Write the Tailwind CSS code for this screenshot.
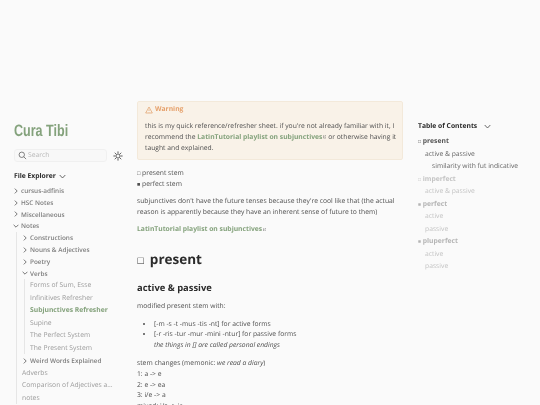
<!DOCTYPE html>
<html><head><meta charset="utf-8"><script src="https://cdn.jsdelivr.net/npm/@tailwindcss/browser@4"></script></head>
<body class="w-[540px] h-[405px] overflow-hidden bg-[#fafafa] font-['Open_Sans',sans-serif] text-[6.75px] text-[#4e4e4e] [text-rendering:geometricPrecision]">
<div class="flex h-[405px] overflow-hidden blur-[0.3px]">
  <aside class="w-[137px] shrink-0 pt-[121px] pl-[14px]">
    <div class="h-[20px] font-['Liberation_Sans',sans-serif] font-bold text-[16.5px] leading-[20px] text-[#84a27c] [transform:scaleX(.76)] origin-left whitespace-nowrap">Cura Tibi</div>
    <div class="flex items-center mt-[8px] gap-[6px]">
      <div class="w-[93px] h-[13px] rounded-[3px] border border-[#f0f0f0] bg-[#f8f8f8] flex items-center pl-[3px] gap-[1px] text-[#b8b8b8]">
        <svg class="w-[9px] h-[9px]" viewBox="0 0 10 10" fill="none" stroke="#555" stroke-width=".8"><circle cx="4.2" cy="4.2" r="3"/><path d="M6.4 6.4 9 9"/></svg>
        <span class="text-[6.75px] leading-none">Search</span>
      </div>
      <svg class="w-[10px] h-[10px]" viewBox="0 0 24 24" fill="none" stroke="#3a3a3a" stroke-width="2"><circle cx="12" cy="12" r="5"/><path d="M12 1v4M12 19v4M1 12h4M19 12h4M4.2 4.2l2.8 2.8M17 17l2.8 2.8M4.2 19.8 7 17M17 7l2.8-2.8"/></svg>
    </div>
    <div class="flex items-center mt-[8px] h-[12px] gap-[3px] font-bold text-[#2b2b2b] text-[6.75px]">File Explorer
      <svg class="w-[7px] h-[5px]" viewBox="0 0 7 5" fill="none" stroke="#444" stroke-width=".8"><path d="M.7 1 3.5 4 6.3 1"/></svg>
    </div>
    <div class="mt-[3px] font-semibold text-[#7d7d7d] text-[6.4px] leading-[11.8px]">
      <div class="flex items-center gap-[3px] h-[11.8px]"><svg class="w-[4px] h-[6px]" viewBox="0 0 4 6" fill="none" stroke="#555" stroke-width=".8"><path d="M.8.6 3.2 3 .8 5.4"/></svg><span>cursus-adfinis</span></div>
      <div class="flex items-center gap-[3px] h-[11.8px]"><svg class="w-[4px] h-[6px]" viewBox="0 0 4 6" fill="none" stroke="#555" stroke-width=".8"><path d="M.8.6 3.2 3 .8 5.4"/></svg><span>HSC Notes</span></div>
      <div class="flex items-center gap-[3px] h-[11.8px]"><svg class="w-[4px] h-[6px]" viewBox="0 0 4 6" fill="none" stroke="#555" stroke-width=".8"><path d="M.8.6 3.2 3 .8 5.4"/></svg><span>Miscellaneous</span></div>
      <div class="flex items-center gap-[2px] h-[11.8px] -ml-[1px]"><svg class="w-[6px] h-[4px]" viewBox="0 0 6 4" fill="none" stroke="#555" stroke-width=".8"><path d="M.6.8 3 3.2 5.4.8"/></svg><span>Notes</span></div>
      <div class="ml-[2px] pl-[6px] border-l border-[#e6e6e6]">
        <div class="flex items-center gap-[3px] h-[11.8px]"><svg class="w-[4px] h-[6px]" viewBox="0 0 4 6" fill="none" stroke="#555" stroke-width=".8"><path d="M.8.6 3.2 3 .8 5.4"/></svg><span>Constructions</span></div>
        <div class="flex items-center gap-[3px] h-[11.8px]"><svg class="w-[4px] h-[6px]" viewBox="0 0 4 6" fill="none" stroke="#555" stroke-width=".8"><path d="M.8.6 3.2 3 .8 5.4"/></svg><span>Nouns &amp; Adjectives</span></div>
        <div class="flex items-center gap-[3px] h-[11.8px]"><svg class="w-[4px] h-[6px]" viewBox="0 0 4 6" fill="none" stroke="#555" stroke-width=".8"><path d="M.8.6 3.2 3 .8 5.4"/></svg><span>Poetry</span></div>
        <div class="flex items-center gap-[2px] h-[11.8px] -ml-[1px]"><svg class="w-[6px] h-[4px]" viewBox="0 0 6 4" fill="none" stroke="#555" stroke-width=".8"><path d="M.6.8 3 3.2 5.4.8"/></svg><span>Verbs</span></div>
        <div class="ml-[1px] pl-[5px] border-l border-[#e6e6e6] font-normal text-[#9a9a9a] text-[6.75px] leading-[12.5px]">
          <div class="h-[12.5px]">Forms of Sum, Esse</div>
          <div class="h-[12.5px]">Infinitives Refresher</div>
          <div class="h-[12.5px] font-bold text-[#84a27c]">Subjunctives Refresher</div>
          <div class="h-[12.5px]">Supine</div>
          <div class="h-[12.5px]">The Perfect System</div>
          <div class="h-[12.5px]">The Present System</div>
        </div>
        <div class="flex items-center gap-[3px] h-[12.5px]"><svg class="w-[4px] h-[6px]" viewBox="0 0 4 6" fill="none" stroke="#555" stroke-width=".8"><path d="M.8.6 3.2 3 .8 5.4"/></svg><span>Weird Words Explained</span></div>
        <div class="font-normal text-[#9a9a9a] text-[6.75px] -ml-[1px] leading-[12.5px]">
          <div class="h-[12.5px]">Adverbs</div>
          <div class="h-[12.5px]">Comparison of Adjectives a...</div>
          <div class="h-[12.5px]">notes</div>
        </div>
      </div>
    </div>
  </aside>
  <main class="w-[266px] shrink-0 pt-[101px] leading-[10.8px]">
    <div class="bg-[#f9f2e8] border border-[#f3e9da] rounded-[2px] pl-[7px] pr-[5px] pt-[2px] pb-[6px]">
      <div class="flex items-center gap-[2px] font-bold text-[#e6a06a] h-[11px]">
        <svg class="w-[8px] h-[8px]" viewBox="0 0 24 24" fill="none" stroke="#e09a62" stroke-width="2"><path d="M12 3 2 21h20z"/><path d="M12 10v5M12 18v1"/></svg>Warning</div>
      <p class="mt-[6px]">this is my quick reference/refresher sheet. if you're not already familiar with it, I recommend the <span class="font-bold text-[#84a27c]">LatinTutorial playlist on subjunctives<svg class="inline w-[3.5px] h-[3.5px] ml-[.5px]" viewBox="0 0 8 8" fill="none" stroke="#555" stroke-width="1"><path d="M3 1.5H1v5.5h5.500V5M4 4l3.500-3.500M5 .5h2.500V3"/></svg></span> or otherwise having it taught and explained.</p>
    </div>
    <p class="mt-[8px]"><span class="text-[5.5px]">□</span> present stem<br><span class="text-[5.5px]">■</span> perfect stem</p>
    <p class="mt-[6.5px]">subjunctives don't have the future tenses because they're cool like that (the actual reason is apparently because they have an inherent sense of future to them)</p>
    <p class="mt-[6px] font-bold text-[#84a27c]">LatinTutorial playlist on subjunctives<svg class="inline w-[3.5px] h-[3.5px] ml-[.5px]" viewBox="0 0 8 8" fill="none" stroke="#555" stroke-width="1"><path d="M3 1.5H1v5.5h5.500V5M4 4l3.500-3.500M5 .5h2.500V3"/></svg></p>
    <h1 class="mt-[14px] text-[13.5px] leading-[20px] font-bold text-[#2b2b2b]"><span class="text-[10.5px] ml-[.5px] mr-[6px]">□</span>present</h1>
    <h2 class="mt-[9.5px] text-[9.4px] leading-[15px] font-bold text-[#2b2b2b]">active &amp; passive</h2>
    <p class="mt-[5.5px]">modified present stem with:</p>
    <ul class="mt-[7px] ml-[17px] list-disc">
      <li>[-m -s -t -mus -tis -nt] for active forms</li>
      <li>[-r -ris -tur -mur -mini -ntur] for passive forms<br><em>the things in [] are called personal endings</em></li>
    </ul>
    <p class="mt-[7px]">stem changes (memonic: <em>we read a diary</em>)<br>1: a -&gt; e<br>2: e -&gt; ea<br>3: i/e -&gt; a<br>mixed: i/e -&gt; ia</p>
  </main>
  <aside class="flex-1 pl-[15px] pt-[120px] text-[6.75px]">
    <div class="flex items-center h-[12px] gap-[7px] font-bold text-[#2b2b2b]">Table of Contents
      <svg class="w-[7px] h-[5px]" viewBox="0 0 7 5" fill="none" stroke="#444" stroke-width=".8"><path d="M.7 1 3.5 4 6.3 1"/></svg></div>
    <div class="mt-[3px] leading-[12.5px] text-[#666]">
      <div class="h-[12.5px] font-bold text-[#555]"><span class="text-[5px]">□</span> present</div>
      <div class="h-[12.5px] pl-[7px]">active &amp; passive</div>
      <div class="h-[12.5px] pl-[14px]">similarity with fut indicative</div>
      <div class="h-[12.5px] font-bold text-[#c4c4c4]"><span class="text-[5px]">□</span> imperfect</div>
      <div class="h-[12.5px] pl-[7px] text-[#c4c4c4]">active &amp; passive</div>
      <div class="h-[12.5px] font-bold text-[#b4b4b4]"><span class="text-[5px]">■</span> perfect</div>
      <div class="h-[12.5px] pl-[7px] text-[#c4c4c4]">active</div>
      <div class="h-[12.5px] pl-[7px] text-[#c4c4c4]">passive</div>
      <div class="h-[12.5px] font-bold text-[#b4b4b4]"><span class="text-[5px]">■</span> pluperfect</div>
      <div class="h-[12.5px] pl-[7px] text-[#c4c4c4]">active</div>
      <div class="h-[12.5px] pl-[7px] text-[#c4c4c4]">passive</div>
    </div>
  </aside>
</div>
</body></html>
